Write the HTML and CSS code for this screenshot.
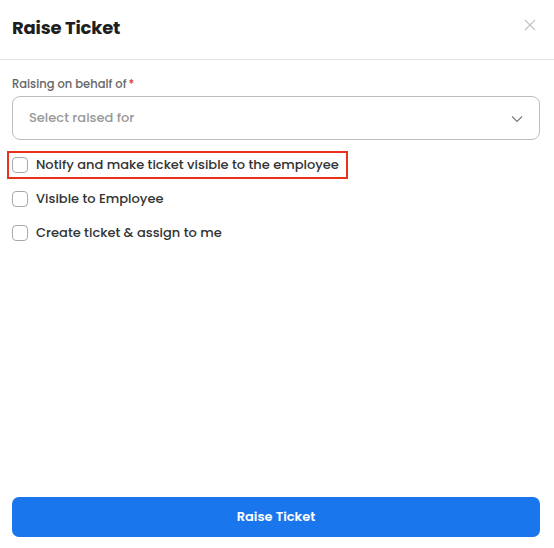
FILE: index.html
```html
<!DOCTYPE html>
<html>
<head>
<meta charset="utf-8">
<link rel="stylesheet" href="styles.css">
</head>
<body>
<div class="modal">
  <div class="header">
    <h1 class="title">Raise Ticket</h1>
    <button class="close" aria-label="Close">
      <svg width="12" height="12" viewBox="0 0 12 12"><path d="M1 1L11 11M11 1L1 11" stroke="#c4c4c4" stroke-width="1.2" fill="none"/></svg>
    </button>
  </div>
  <div class="body">
    <div class="field">
      <label class="label">Raising on behalf of<span class="req">*</span></label>
      <div class="select">
        <span class="placeholder">Select raised for</span>
        <svg class="chev" width="12" height="8" viewBox="0 0 12 8"><path d="M1 1.5L6 6.5L11 1.5" stroke="#777" stroke-width="1.1" fill="none"/></svg>
      </div>
    </div>
    <div class="checks">
      <label class="check highlight"><span class="box"></span><span>Notify and make ticket visible to the employee</span></label>
      <label class="check"><span class="box"></span><span>Visible to Employee</span></label>
      <label class="check"><span class="box"></span><span>Create ticket &amp; assign to me</span></label>
    </div>
  </div>
  <div class="footer">
    <button class="primary">Raise Ticket</button>
  </div>
</div>
</body>
</html>
```
FILE: styles.css
```css
* { box-sizing: border-box; }
html, body { margin: 0; padding: 0; background: #fff; }
body { font-family: "Poppins", "Open Sans", "DejaVu Sans", sans-serif; color: #222; }
.modal { width: 554px; height: 548px; display: flex; flex-direction: column; }
.header { height: 60px; border-bottom: 1px solid #e3e3e3; display: flex; align-items: center; justify-content: space-between; padding: 0 18px 4px 12px; }
.title { margin: 0; font-size: 18px; font-weight: 700; color: #1e1e1e; letter-spacing: -0.2px; }
.close { border: 0; background: none; padding: 0; display: flex; margin-top: -6px; }
.body { flex: 1; padding: 15px 14px 0 12px; }
.label { display: block; font-size: 11.5px; font-weight: 500; color: #666; line-height: 18px; margin-bottom: 3px; }
.req { color: #e53935; margin-left: 2px; }
.select { height: 44px; border: 1px solid #bdbdbd; border-radius: 8px; display: flex; align-items: center; justify-content: space-between; padding: 0 16px 0 16px; }
.placeholder { font-size: 13px; font-weight: 500; color: #999; }
.chev { margin-top: 2px; }
.checks { display: flex; flex-direction: column; gap: 6px; margin-top: 11px; margin-left: -5px; }
.check { display: flex; align-items: center; gap: 8px; font-size: 13px; font-weight: 500; color: #333; height: 28px; padding-left: 5px; width: max-content; }
.check.highlight { border: 2px solid #e8321e; padding-left: 3px; padding-right: 7px; }
.box { width: 16px; height: 16px; border: 1px solid #aaa; border-radius: 4px; flex: none; }
.footer { padding: 0 14px 11px 12px; }
.primary { width: 100%; height: 40px; border: 0; border-radius: 7px; background: #1a76ed; color: #fff; font-family: inherit; font-size: 13px; font-weight: 600; }
```
